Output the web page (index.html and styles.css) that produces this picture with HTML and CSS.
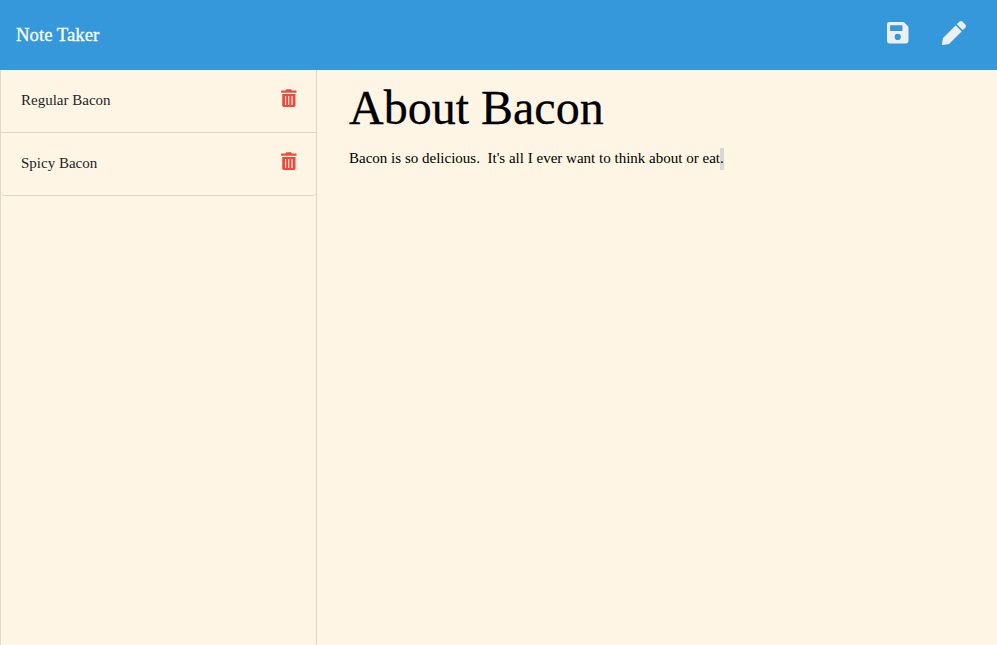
FILE: index.html
```html
<!DOCTYPE html>
<html lang="en">
<head>
<meta charset="utf-8">
<title>Note Taker</title>
<link rel="stylesheet" href="styles.css">
</head>
<body>
<nav class="navbar">
  <a class="brand">Note Taker</a>
  <div class="actions">
    <svg class="save" viewBox="0 0 22 22"><path fill-rule="evenodd" d="M2.500 0H16.200Q17.200 0 18 .8L21.200 4Q22 4.800 22 5.800V19.500Q22 22 19.500 22H2.500Q0 22 0 19.500V2.500Q0 0 2.500 0ZM3.200 3.200V9.300H15.800V3.200ZM11 12.100a3.150 3.150 0 1 0 0 6.300a3.150 3.150 0 1 0 0-6.300Z"/></svg>
    <svg class="pen" viewBox="0 0 512 512"><path d="M497.9 142.1l-46.100 46.100c-4.700 4.700-12.300 4.700-17 0l-111-111c-4.700-4.700-4.700-12.300 0-17l46.100-46.100c18.700-18.700 49.100-18.700 67.900 0l60.100 60.100c18.800 18.700 18.800 49.100 0 67.900zM284.200 99.800L21.600 362.400.4 483.900c-2.900 16.400 11.400 30.600 27.800 27.800l121.500-21.300 262.600-262.600c4.700-4.700 4.700-12.300 0-17l-111-111c-4.800-4.700-12.400-4.700-17.100 0z"/></svg>
  </div>
</nav>
<main class="layout">
  <aside class="sidebar">
    <ul class="notes">
      <li class="note"><span>Regular Bacon</span>
        <svg class="trash" viewBox="0 0 16 18"><path fill-rule="evenodd" d="M.7 1.600H4.500L5 .7Q5.200.2 5.700.2H9.700Q10.200.2 10.400.7L10.900 1.600H14.900Q15.500 1.600 15.500 2.200V3.800H.1V2.200Q.1 1.600.7 1.600ZM1.200 4.900H14.500V16.600Q14.500 18 13 18H2.700Q1.200 18 1.200 16.600ZM4 6.900V15.900H5.100V6.900ZM7.200 6.900V15.900H8.300V6.900ZM10.500 6.900V15.900H11.600V6.900Z"/></svg></li>
      <li class="note"><span>Spicy Bacon</span>
        <svg class="trash" viewBox="0 0 16 18"><path fill-rule="evenodd" d="M.7 1.600H4.500L5 .7Q5.200.2 5.700.2H9.700Q10.200.2 10.400.7L10.900 1.600H14.900Q15.500 1.600 15.500 2.200V3.800H.1V2.200Q.1 1.600.7 1.600ZM1.200 4.900H14.500V16.600Q14.500 18 13 18H2.700Q1.200 18 1.200 16.600ZM4 6.900V15.900H5.100V6.900ZM7.200 6.900V15.900H8.300V6.900ZM10.500 6.900V15.900H11.600V6.900Z"/></svg></li>
    </ul>
  </aside>
  <section class="editor">
    <h1 class="title">About Bacon</h1>
    <p class="text">Bacon is so delicious.&nbsp; It's all I ever want to think about or eat<span class="selected">.</span></p>
  </section>
</main>
</body>
</html>
```
FILE: styles.css
```css
* { box-sizing: border-box; }

body {
  margin: 0;
  height: 100vh;
  display: flex;
  flex-direction: column;
  overflow: hidden;
  background: #fff5e4;
  color: #000;
  font: 15px/22.5px "Liberation Serif", serif;
}

.navbar {
  height: 70px;
  flex: none;
  display: flex;
  align-items: center;
  justify-content: space-between;
  padding: 0 31px 0 16px;
  background: #3498db;
}

.brand {
  color: #fff;
  font-size: 18.75px;
  line-height: 28px;
  -webkit-text-stroke: 0.3px #fff;
}

.actions { display: flex; align-items: center; gap: 33.5px; padding-bottom: 4px; }

.actions svg { fill: #ecf0f1; }
.save { width: 21.500px; height: 21.500px; }
.pen { width: 24px; height: 24px; }

.layout { flex: 1; display: flex; }

.sidebar {
  width: 317px;
  border: solid #dfd7c8;
  border-width: 0 1px;
}

.notes {
  margin: 0;
  padding: 0;
  list-style: none;
}

.note {
  height: 63px;
  display: flex;
  justify-content: space-between;
  align-items: flex-start;
  padding: 19px 19px 0 20px;
  border-bottom: 1px solid #dfd7c8;
  color: #212529;
}

.note:last-child { border-radius: 0 0 4px 4px; }

.trash { width: 16px; height: 18px; fill: #e74c3c; }

.editor { flex: 1; padding: 9px 32px; }

.title {
  margin: 0;
  font-size: 48px;
  font-weight: 400;
  line-height: 58px;
  -webkit-text-stroke: 0.3px #000;
}

.text { margin: 10px 0 0; word-spacing: 0.03px; }

.selected {
  display: inline-block;
  width: 4px;
  height: 22px;
  vertical-align: top;
  background: linear-gradient(#d9d7d2, #d9d7d2) 0 1px no-repeat;
  padding-bottom: 23px;
}
```
